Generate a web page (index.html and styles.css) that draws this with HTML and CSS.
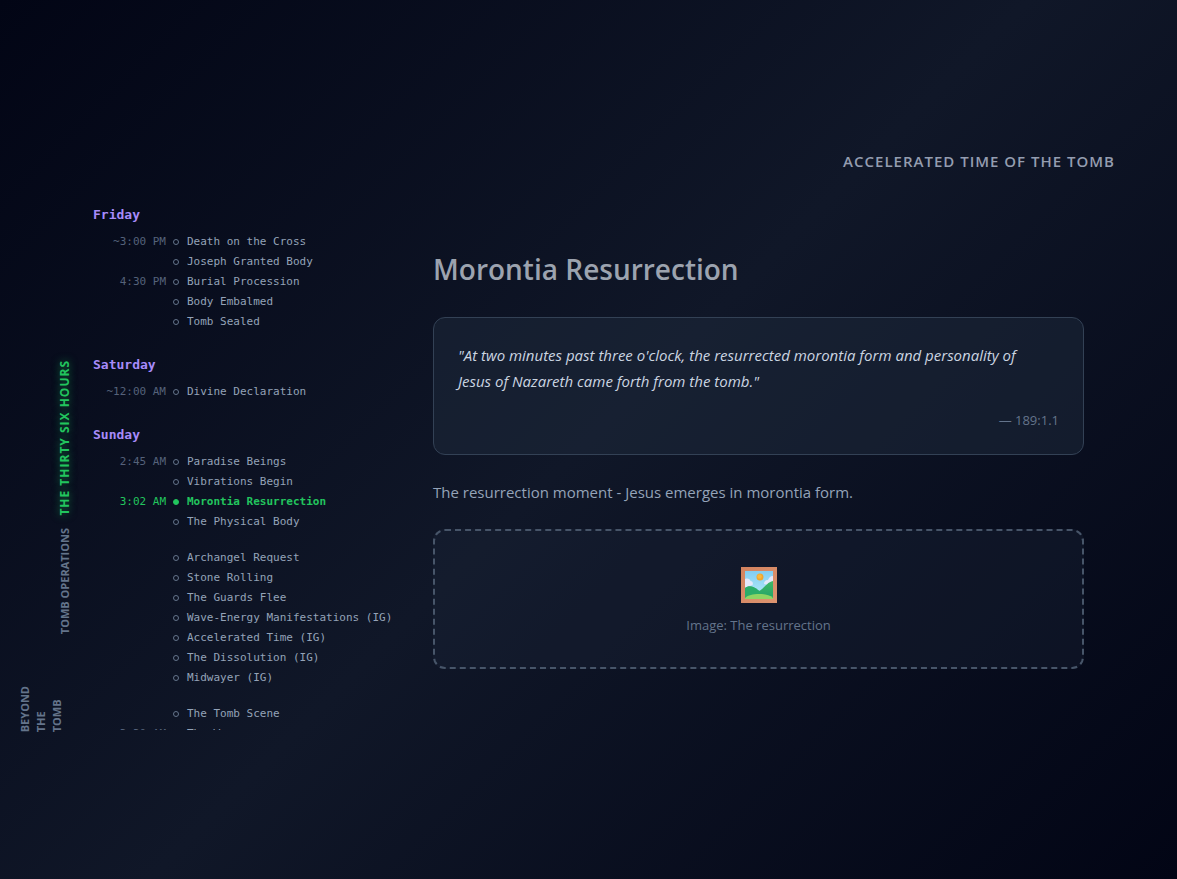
FILE: index.html
```html
<!DOCTYPE html>
<html lang="en">
<head>
<meta charset="utf-8">
<meta name="viewport" content="width=device-width, initial-scale=1">
<title>Morontia Resurrection</title>
<link rel="stylesheet" href="styles.css">
</head>
<body>
<div class="page">
  <header class="topbar">
    <p class="chapter">Accelerated Time of the Tomb</p>
  </header>
  <div class="stage">
    <nav class="parts" aria-label="Parts">
      <button class="part part-active" type="button">The Thirty Six Hours</button>
      <button class="part" type="button">Tomb Operations</button>
      <button class="part part-stacked" type="button">Beyond<br>The<br>Tomb</button>
    </nav>
    <nav class="timeline" aria-label="Timeline">
      <section class="day">
        <h2 class="day-name">Friday</h2>
        <ul class="events">
          <li><a class="event" href="#"><time class="time">~3:00 PM</time><span class="dot"></span><span>Death on the Cross</span></a></li>
          <li><a class="event" href="#"><span class="time"></span><span class="dot"></span><span>Joseph Granted Body</span></a></li>
          <li><a class="event" href="#"><time class="time">4:30 PM</time><span class="dot"></span><span>Burial Procession</span></a></li>
          <li><a class="event" href="#"><span class="time"></span><span class="dot"></span><span>Body Embalmed</span></a></li>
          <li><a class="event" href="#"><span class="time"></span><span class="dot"></span><span>Tomb Sealed</span></a></li>
        </ul>
      </section>
      <section class="day">
        <h2 class="day-name">Saturday</h2>
        <ul class="events">
          <li><a class="event" href="#"><time class="time">~12:00 AM</time><span class="dot"></span><span>Divine Declaration</span></a></li>
        </ul>
      </section>
      <section class="day">
        <h2 class="day-name">Sunday</h2>
        <ul class="events">
          <li><a class="event" href="#"><time class="time">2:45 AM</time><span class="dot"></span><span>Paradise Beings</span></a></li>
          <li><a class="event" href="#"><span class="time"></span><span class="dot"></span><span>Vibrations Begin</span></a></li>
          <li><a class="event event-active" href="#" aria-current="true"><time class="time">3:02 AM</time><span class="dot"></span><span>Morontia Resurrection</span></a></li>
          <li><a class="event" href="#"><span class="time"></span><span class="dot"></span><span>The Physical Body</span></a></li>
        </ul>
        <ul class="events">
          <li><a class="event" href="#"><span class="time"></span><span class="dot"></span><span>Archangel Request</span></a></li>
          <li><a class="event" href="#"><span class="time"></span><span class="dot"></span><span>Stone Rolling</span></a></li>
          <li><a class="event" href="#"><span class="time"></span><span class="dot"></span><span>The Guards Flee</span></a></li>
          <li><a class="event" href="#"><span class="time"></span><span class="dot"></span><span>Wave-Energy Manifestations (IG)</span></a></li>
          <li><a class="event" href="#"><span class="time"></span><span class="dot"></span><span>Accelerated Time (IG)</span></a></li>
          <li><a class="event" href="#"><span class="time"></span><span class="dot"></span><span>The Dissolution (IG)</span></a></li>
          <li><a class="event" href="#"><span class="time"></span><span class="dot"></span><span>Midwayer (IG)</span></a></li>
        </ul>
        <ul class="events">
          <li><a class="event" href="#"><span class="time"></span><span class="dot"></span><span>The Tomb Scene</span></a></li>
          <li><a class="event" href="#"><time class="time">3:30 AM</time><span class="dot"></span><span>The Women</span></a></li>
        </ul>
      </section>
    </nav>
    <main class="content">
      <h1 class="title">Morontia Resurrection</h1>
      <figure class="quote">
        <blockquote class="quote-text">"At two minutes past three o'clock, the resurrected morontia form and personality of Jesus of Nazareth came forth from the tomb."</blockquote>
        <figcaption class="quote-source">— 189:1.1</figcaption>
      </figure>
      <p class="summary">The resurrection moment - Jesus emerges in morontia form.</p>
      <figure class="placeholder">
        <svg class="picture" viewBox="0 0 36 36" aria-hidden="true">
          <defs>
            <linearGradient id="sky" x1="0" y1="0" x2="0" y2="1"><stop offset="0" stop-color="#82cdf2"/><stop offset="1" stop-color="#b9edfb"/></linearGradient>
            <linearGradient id="frame" x1="0" y1="0" x2="1" y2="1"><stop offset="0" stop-color="#d3835f"/><stop offset="1" stop-color="#dd9470"/></linearGradient>
            <linearGradient id="hill" x1="0" y1="0" x2="0" y2="1"><stop offset="0" stop-color="#42b867"/><stop offset="1" stop-color="#22a268"/></linearGradient>
            <clipPath id="view"><path d="M4 4h28v28H4z"/></clipPath>
          </defs>
          <path fill="url(#frame)" d="M0 0h36v36H0z"/>
          <g clip-path="url(#view)">
            <path fill="url(#sky)" d="M4 4h28v28H4z"/>
            <path fill="#e6e8fb" d="M4 12c3-1 5 0 5.500 2 2 0 3 2 2 4L4 21zM32 9c-3 0-4 2-5 4-3 0-4 2-4 4l9 2z"/>
            <circle cx="19" cy="10" r="3.500" fill="#efa52e"/>
            <circle cx="18.500" cy="9.500" r="2.300" fill="#f8b83e"/>
            <path fill="url(#hill)" d="M4 21c4-3 9-2 14 3 6-3 8-9 14-10v18H4z"/>
            <path fill="#2bad69" d="M4 21c5-3 11-1 16 5l-1 6H4z"/>
            <path fill="#8fd564" d="M4 31c3-3 8-4 14-4s11 1 14 4v1H4z"/>
          </g>
        </svg>
        <figcaption class="caption">Image: The resurrection</figcaption>
      </figure>
    </main>
  </div>
</div>
</body>
</html>
```
FILE: styles.css
```css
* {
  box-sizing: border-box;
  margin: 0;
  padding: 0;
}

body {
  background: linear-gradient(135deg, #020515 0%, #101728 50%, #020515 100%);
  color: #94a3b8;
  font-family: "Segoe UI", "Open Sans", "Noto Sans", sans-serif;
  font-size: 15px;
}

.page {
  display: flex;
  flex-direction: column;
  justify-content: center;
  gap: 30px;
  min-height: 100vh;
  padding: 0 62px 0 18px;
}

.topbar {
  display: flex;
  justify-content: flex-end;
}

.chapter {
  font-size: 15px;
  font-weight: 600;
  line-height: 24px;
  letter-spacing: 1px;
  text-transform: uppercase;
  color: #949db0;
}

.stage {
  display: flex;
  height: 60vh;
}

.parts {
  display: flex;
  flex-direction: column;
  justify-content: flex-end;
  align-items: flex-end;
  gap: 12px;
  width: 55px;
  margin-right: 20px;
}

.part {
  border: 0;
  background: none;
  color: #64748b;
  font-family: inherit;
  font-size: 11px;
  font-weight: 700;
  line-height: 16px;
  text-align: left;
  text-transform: uppercase;
  white-space: nowrap;
  writing-mode: vertical-rl;
  transform: rotate(180deg);
}

.part-active {
  color: #22c55e;
  font-size: 12px;
  letter-spacing: 1px;
  text-shadow: 0 0 8px rgba(34, 197, 94, 0.6);
}

.part-stacked {
  margin: 40px 8px -2px 0;
}

.timeline {
  flex: none;
  width: 308px;
  padding-top: 2px;
  overflow: hidden;
  font-family: Consolas, "DejaVu Sans Mono", monospace;
}

.day {
  margin-bottom: 23px;
}

.day-name {
  margin-bottom: 7px;
  color: #a78bfa;
  font-size: 13px;
  font-weight: 700;
  line-height: 20px;
}

.events {
  list-style: none;
}

.events + .events {
  margin-top: 16px;
}

.event {
  display: grid;
  grid-template-columns: 73px 7px 1fr;
  column-gap: 7px;
  align-items: center;
  color: #94a3b8;
  font-size: 11px;
  line-height: 20px;
  text-decoration: none;
  white-space: nowrap;
}

.time {
  color: #55627a;
  text-align: right;
}

.dot {
  width: 6px;
  height: 6px;
  border: 1px solid #64748b;
  border-radius: 50%;
}

.event-active {
  color: #22c55e;
  font-weight: 700;
}

.event-active .time {
  color: #22c55e;
  font-weight: 400;
}

.event-active .dot {
  border-color: #22c55e;
  background: #22c55e;
}

.content {
  display: flex;
  flex: 1;
  flex-direction: column;
  justify-content: center;
  gap: 24px;
  min-width: 0;
  padding: 0 31px 14px 32px;
}

.title {
  margin-bottom: 4px;
  color: #9ca3af;
  font-size: 28px;
  font-weight: 600;
  line-height: 40px;
}

.quote {
  padding: 24px;
  border: 1px solid #334155;
  border-radius: 12px;
  background: rgba(30, 41, 59, 0.5);
}

.quote-text {
  padding-right: 24px;
  color: #cbd5e1;
  font-size: 15px;
  font-style: italic;
  line-height: 26px;
}

.quote-source {
  margin-top: 16px;
  color: #64748b;
  font-size: 13px;
  line-height: 20px;
  text-align: right;
}

.summary {
  line-height: 26px;
}

.placeholder {
  display: flex;
  flex-direction: column;
  align-items: center;
  gap: 12px;
  padding: 36px 32px 32px;
  border: 2px dashed #475569;
  border-radius: 12px;
  background: rgba(30, 41, 59, 0.3);
}

.picture {
  width: 36px;
  height: 36px;
}

.caption {
  color: #64748b;
  font-size: 13px;
  line-height: 20px;
}
```
